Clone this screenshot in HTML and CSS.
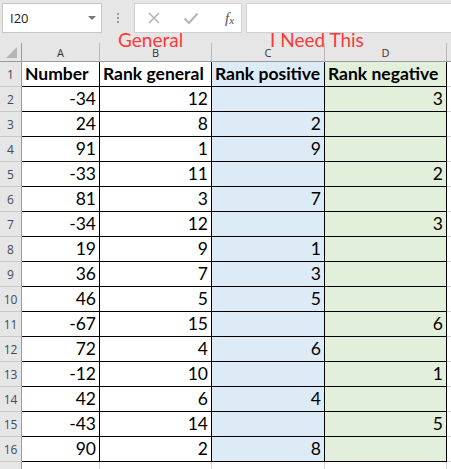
FILE: index.html
```html
<!DOCTYPE html>
<html>
<head>
<meta charset="utf-8">
<link rel="stylesheet" href="styles.css">
</head>
<body>
<div class="app">
  <div class="fbar">
    <div class="namebox"><span class="ref">I20</span><span class="caret"></span></div>
    <div class="grip"><i></i><i></i><i></i></div>
    <div class="fbtns">
      <svg class="ic" width="14" height="14" viewBox="0 0 14 14"><path d="M2 2 L12 12 M12 2 L2 12" stroke="#b4b4b4" stroke-width="1.6" fill="none"/></svg>
      <svg class="ic" width="16" height="14" viewBox="0 0 16 14"><path d="M1.5 7.5 L6 12 L14.5 2.5" stroke="#b4b4b4" stroke-width="2" fill="none"/></svg>
      <span class="fx">f<sub>x</sub></span>
    </div>
    <div class="finput"></div>
  </div>
  <div class="sheet">
    <span class="note note-general">General</span>
    <span class="note note-need">I Need This</span>
    <div class="grid">
      <div class="ch corner"><span class="tri"></span></div>
      <div class="ch">A</div><div class="ch">B</div><div class="ch">C</div><div class="ch">D</div><div class="ch e"></div>

      <div class="rh">1</div><div class="c hd">Number</div><div class="c hd">Rank general</div><div class="c hd pos">Rank positive</div><div class="c hd neg">Rank negative</div><div class="c e"></div>
      <div class="rh">2</div><div class="c">-34</div><div class="c">12</div><div class="c pos"></div><div class="c neg">3</div><div class="c e"></div>
      <div class="rh">3</div><div class="c">24</div><div class="c">8</div><div class="c pos">2</div><div class="c neg"></div><div class="c e"></div>
      <div class="rh">4</div><div class="c">91</div><div class="c">1</div><div class="c pos">9</div><div class="c neg"></div><div class="c e"></div>
      <div class="rh">5</div><div class="c">-33</div><div class="c">11</div><div class="c pos"></div><div class="c neg">2</div><div class="c e"></div>
      <div class="rh">6</div><div class="c">81</div><div class="c">3</div><div class="c pos">7</div><div class="c neg"></div><div class="c e"></div>
      <div class="rh">7</div><div class="c">-34</div><div class="c">12</div><div class="c pos"></div><div class="c neg">3</div><div class="c e"></div>
      <div class="rh">8</div><div class="c">19</div><div class="c">9</div><div class="c pos">1</div><div class="c neg"></div><div class="c e"></div>
      <div class="rh">9</div><div class="c">36</div><div class="c">7</div><div class="c pos">3</div><div class="c neg"></div><div class="c e"></div>
      <div class="rh">10</div><div class="c">46</div><div class="c">5</div><div class="c pos">5</div><div class="c neg"></div><div class="c e"></div>
      <div class="rh">11</div><div class="c">-67</div><div class="c">15</div><div class="c pos"></div><div class="c neg">6</div><div class="c e"></div>
      <div class="rh">12</div><div class="c">72</div><div class="c">4</div><div class="c pos">6</div><div class="c neg"></div><div class="c e"></div>
      <div class="rh">13</div><div class="c">-12</div><div class="c">10</div><div class="c pos"></div><div class="c neg">1</div><div class="c e"></div>
      <div class="rh">14</div><div class="c">42</div><div class="c">6</div><div class="c pos">4</div><div class="c neg"></div><div class="c e"></div>
      <div class="rh">15</div><div class="c">-43</div><div class="c">14</div><div class="c pos"></div><div class="c neg">5</div><div class="c e"></div>
      <div class="rh">16</div><div class="c">90</div><div class="c">2</div><div class="c pos">8</div><div class="c neg"></div><div class="c e"></div>
      <div class="rh"></div><div class="c blank"></div><div class="c blank"></div><div class="c blank"></div><div class="c blank"></div><div class="c e"></div>
    </div>
  </div>
</div>
</body>
</html>
```
FILE: styles.css
```css
html, body {
  margin: 0;
  padding: 0;
  background: #e6e6e6;
  overflow: hidden;
}
.app {
  width: 451px;
  height: 469px;
  overflow: hidden;
  font-family: Lato, "Liberation Sans", sans-serif;
}
.fbar {
  display: flex;
  align-items: stretch;
  padding: 3px 0 0 2px;
  height: 30px;
}
.namebox {
  box-sizing: border-box;
  width: 100px;
  height: 30px;
  background: #fff;
  border: 1px solid #c6c6c6;
  display: flex;
  align-items: center;
  justify-content: space-between;
  padding: 0 5px 0 7px;
}
.ref {
  font-family: "Open Sans", "Liberation Sans", sans-serif;
  font-size: 13px;
  color: #222;
}
.caret {
  width: 0;
  height: 0;
  border-left: 4px solid transparent;
  border-right: 4px solid transparent;
  border-top: 4px solid #777;
}
.grip {
  width: 32px;
  display: flex;
  flex-direction: column;
  align-items: center;
  justify-content: center;
  gap: 2px;
}
.grip i {
  display: block;
  width: 2px;
  height: 2px;
  background: #9a9a9a;
}
.fbtns {
  box-sizing: border-box;
  width: 108px;
  height: 30px;
  background: #fff;
  border: 1px solid #d0d0d0;
  display: flex;
  align-items: center;
  padding: 0 0 0 12px;
}
.ic { display: block; }
.fbtns .ic:nth-child(1) { margin-right: 22px; }
.fbtns .ic:nth-child(2) { margin-right: 26px; }
.fx {
  font-family: "Liberation Serif", serif;
  font-style: italic;
  font-size: 15px;
  color: #555;
  line-height: 1;
}
.fx sub {
  font-size: 11px;
  vertical-align: -1px;
}
.finput {
  margin-left: 4px;
  flex: 1;
  height: 30px;
  box-sizing: border-box;
  background: #fff;
  border: 1px solid #d0d0d0;
  border-right: none;
}
.sheet {
  position: relative;
  margin-top: 10px;
}
.note {
  position: absolute;
  top: -15px;
  font-size: 19px;
  color: #ff3838;
  line-height: 24px;
  white-space: nowrap;
  z-index: 2;
}
.note-general { left: 118px; }
.note-need { left: 270px; }
.grid {
  display: grid;
  grid-template-columns: 22px 78px 112px 113px 122px 20px;
  grid-template-rows: 19px;
  grid-auto-rows: 25px;
}
.grid > div {
  box-sizing: border-box;
}
.ch {
  background: #e6e6e6;
  border-right: 1px solid #b9b9b9;
  border-bottom: 1px solid #9b9b9b;
  font-family: "Open Sans", "Liberation Sans", sans-serif;
  font-size: 11px;
  color: #333;
  text-align: center;
  line-height: 18px;
  padding-top: 1px;
}
.corner {
  position: relative;
  border-right: 1px solid #9b9b9b;
}
.tri {
  position: absolute;
  right: 4px;
  bottom: 3px;
  width: 0;
  height: 0;
  border-left: 11px solid transparent;
  border-bottom: 11px solid #b5b5b5;
}
.rh {
  background: #e6e6e6;
  border-right: 1px solid #9b9b9b;
  border-bottom: 1px solid #c8c8c8;
  font-family: "Open Sans", "Liberation Sans", sans-serif;
  font-size: 12px;
  color: #3c4a5c;
  text-align: center;
  line-height: 25px;
}
.c {
  background: #fff;
  border-right: 1px solid #000;
  border-bottom: 1px solid #000;
  font-size: 17.5px;
  color: #000;
  text-align: right;
  padding: 0 3px 0 3px;
  line-height: 24px;
  white-space: nowrap;
  overflow: hidden;
}
.c.hd {
  font-weight: bold;
  text-align: left;
}
.c.pos { background: #ddebf7; }
.c.neg { background: #e2efda; }
.c.e {
  border-right: 1px solid #d4d4d4;
  border-bottom: 1px solid #d4d4d4;
}
.c.blank {
  border-right: 1px solid #d4d4d4;
  border-bottom: 1px solid #d4d4d4;
}
.ch.e { border-right: 1px solid #b9b9b9; }
```
